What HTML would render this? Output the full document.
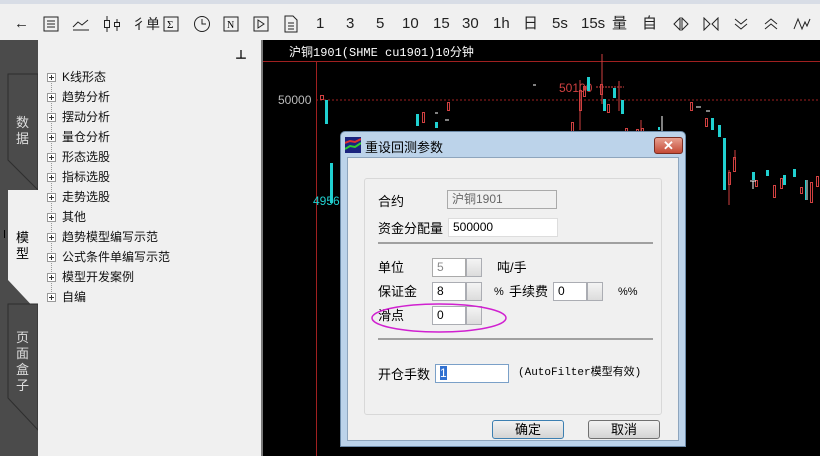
<!DOCTYPE html>
<html><head><meta charset="utf-8"><style>
*{margin:0;padding:0;box-sizing:border-box}
body{width:820px;height:456px;overflow:hidden;position:relative;background:#000;font-family:"Liberation Sans","Noto Sans CJK SC",sans-serif;font-size:12px}
.abs{position:absolute}
#tb{left:0;top:0;width:820px;height:40px;background:#f0f0f0;border-top:4px solid #d8dde6}
.ti{position:absolute;top:10px;font-size:15px;color:#222;font-family:"Liberation Sans","Noto Sans CJK SC",sans-serif;line-height:20px}
#tabs{left:0;top:40px;width:38px;height:416px;background:#4b4b4b}
#tree{left:38px;top:40px;width:223px;height:416px;background:#f0f0f0}
.node{position:absolute;left:9px;font-size:12px;color:#111;line-height:14px;white-space:nowrap}
.pl{display:inline-block;width:9px;height:9px;border:1px solid #999;background:#fff;position:relative;vertical-align:-1px;margin-right:6px}
.pl:before{content:"";position:absolute;left:1px;top:3px;width:5px;height:1px;background:#333}
.pl:after{content:"";position:absolute;left:3px;top:1px;width:1px;height:5px;background:#333}
#dlg{left:340px;top:131px;width:346px;height:316px;background:#bcd3ea;border:1px solid #6c8aa8;border-radius:5px 5px 0 0}
#body{position:absolute;left:6px;top:25px;width:332px;height:284px;background:#f0f0f0;border:1px solid #8ea5bd}
.lb{position:absolute;font-size:13px;color:#000;white-space:nowrap;line-height:15px}
.in{position:absolute;height:19px;background:#fff;border:1px solid #abadb3;font-size:12px;padding-left:4px;line-height:17px}
.sp{position:absolute;width:16px;height:19px;border:1px solid #abadb3;background:linear-gradient(#f4f4f4,#dcdcdc)}
.btn{position:absolute;width:72px;height:19px;border:1px solid #707070;border-radius:3px;background:linear-gradient(#f2f2f2,#d4d4d4);text-align:center;font-size:13px;line-height:17px}
</style></head><body>
<div id="tb" class="abs">
<span class="ti" style="left:14px">←</span>
<svg class="abs" style="left:43px;top:12px" width="16" height="16"><rect x="1" y="1" width="14" height="14" fill="none" stroke="#222"/><path d="M4 5h8M4 8h8M4 11h8" stroke="#222"/></svg>
<svg class="abs" style="left:72px;top:12px" width="18" height="16"><path d="M1 11l5-5 4 3 6-5M1 14h16" stroke="#222" fill="none"/></svg>
<svg class="abs" style="left:103px;top:11px" width="18" height="18"><path d="M4 1v16M14 4v12" stroke="#222"/><rect x="1.5" y="5.5" width="5" height="7" fill="#f0f0f0" stroke="#222"/><rect x="11.5" y="7.5" width="5" height="4" fill="#f0f0f0" stroke="#222"/></svg>
<span class="ti" style="left:132px;font-size:14px">彳单</span>
<svg class="abs" style="left:163px;top:12px" width="16" height="16"><rect x="1" y="1" width="14" height="14" fill="none" stroke="#222"/><text x="4" y="12" font-size="11" font-family="Liberation Serif">Σ</text></svg>
<svg class="abs" style="left:193px;top:11px" width="18" height="18"><circle cx="9" cy="9" r="7.5" fill="none" stroke="#222"/><path d="M9 4v5h4" stroke="#222" fill="none"/></svg>
<svg class="abs" style="left:223px;top:12px" width="16" height="16"><rect x="1" y="1" width="14" height="14" fill="none" stroke="#222"/><text x="4" y="12" font-size="10" font-family="Liberation Serif">N</text></svg>
<svg class="abs" style="left:253px;top:12px" width="16" height="16"><rect x="1" y="1" width="14" height="14" fill="none" stroke="#222"/><path d="M5 4l6 4-6 4z" fill="none" stroke="#222"/></svg>
<svg class="abs" style="left:284px;top:11px" width="14" height="18"><path d="M1 1h8l4 4v12H1z M4 8h6M4 11h6M4 14h6" fill="none" stroke="#222"/></svg>
<span class="ti" style="left:316px">1</span>
<span class="ti" style="left:346px">3</span>
<span class="ti" style="left:376px">5</span>
<span class="ti" style="left:402px">10</span>
<span class="ti" style="left:433px">15</span>
<span class="ti" style="left:462px">30</span>
<span class="ti" style="left:493px">1h</span>
<span class="ti" style="left:523px">日</span>
<span class="ti" style="left:552px">5s</span>
<span class="ti" style="left:581px">15s</span>
<span class="ti" style="left:612px">量</span>
<span class="ti" style="left:642px">自</span>
<svg class="abs" style="left:673px;top:13px" width="16" height="14"><path d="M7 1L1 7l6 6zM9 1l6 6-6 6z" fill="none" stroke="#222"/></svg>
<svg class="abs" style="left:703px;top:13px" width="16" height="14"><path d="M1 1l6 6-6 6zM15 1L9 7l6 6z" fill="none" stroke="#222"/></svg>
<svg class="abs" style="left:733px;top:13px" width="16" height="14"><path d="M2 2l6 5 6-5M2 7l6 5 6-5" fill="none" stroke="#222"/></svg>
<svg class="abs" style="left:763px;top:13px" width="16" height="14"><path d="M2 7l6-5 6 5M2 12l6-5 6 5" fill="none" stroke="#222"/></svg>
<svg class="abs" style="left:793px;top:13px" width="18" height="14"><path d="M1 12L5 2l4 10 3-7 2 4 3-7" fill="none" stroke="#222"/></svg>
</div>

<div id="tabs" class="abs">
<svg width="38" height="416" class="abs" style="left:0;top:0">
<path d="M8 34h30v116L8 120z" fill="#4b4b4b" stroke="#2e2e2e"/>
<path d="M8 150h30v122L8 240z" fill="#f0f0f0"/>
<path d="M8 264h30v126L8 358z" fill="#4b4b4b" stroke="#2e2e2e"/>
<rect x="4" y="190" width="1" height="8" fill="#000"/>
</svg>
<div class="abs" style="left:16px;top:75px;color:#ddd;font-size:13px;line-height:16px;width:14px">数据</div>
<div class="abs" style="left:16px;top:190px;color:#000;font-size:13px;line-height:16px;width:14px">模型</div>
<div class="abs" style="left:16px;top:290px;color:#ddd;font-size:13px;line-height:16px;width:14px">页面盒子</div>
</div>

<div id="tree" class="abs">
<div class="abs" style="left:197px;top:6px;font-size:12px;font-weight:bold">⊥</div>
<div class="abs" style="left:13px;top:38px;width:0;height:220px;border-left:1px dotted #999"></div>
<div class="node" style="top:30px"><span class="pl"></span>K线形态</div>
<div class="node" style="top:50px"><span class="pl"></span>趋势分析</div>
<div class="node" style="top:70px"><span class="pl"></span>摆动分析</div>
<div class="node" style="top:90px"><span class="pl"></span>量仓分析</div>
<div class="node" style="top:110px"><span class="pl"></span>形态选股</div>
<div class="node" style="top:130px"><span class="pl"></span>指标选股</div>
<div class="node" style="top:150px"><span class="pl"></span>走势选股</div>
<div class="node" style="top:170px"><span class="pl"></span>其他</div>
<div class="node" style="top:190px"><span class="pl"></span>趋势模型编写示范</div>
<div class="node" style="top:210px"><span class="pl"></span>公式条件单编写示范</div>
<div class="node" style="top:230px"><span class="pl"></span>模型开发案例</div>
<div class="node" style="top:250px"><span class="pl"></span>自编</div>
</div>
<div class="abs" style="left:261px;top:40px;width:2px;height:416px;background:#7a7a7a"></div>

<svg class="abs" style="left:263px;top:40px" width="557" height="416">
<rect x="0" y="21" width="557" height="1" fill="#a02020"/>
<rect x="53" y="21" width="1" height="395" fill="#a02020"/>
<line x1="53" y1="60" x2="557" y2="60" stroke="#a02020" stroke-dasharray="2,2"/>
<text x="26" y="16" fill="#fff" font-size="12" font-family="Liberation Mono,Noto Sans CJK SC,monospace">沪铜1901(SHME cu1901)10分钟</text>
<text x="15" y="64" fill="#bbb" font-size="12" font-family="Liberation Sans">50000</text>
<text x="296" y="52" fill="#d04040" font-size="12" font-family="Liberation Sans">50100</text>
<path d="M333 47h28" stroke="#d04040" stroke-dasharray="2,1"/>
<text x="50" y="165" fill="#20d0d0" font-size="12" font-family="Liberation Sans">4956</text>
<g fill="#20d0d0">
<rect x="62" y="60" width="3" height="24"/><rect x="67" y="123" width="3" height="40"/>
<rect x="153" y="74" width="3" height="12"/><rect x="172" y="82" width="3" height="6"/><rect x="195" y="93" width="3" height="6"/>
<rect x="324" y="37" width="3" height="14"/><rect x="340" y="59" width="3" height="12"/><rect x="350" y="48" width="3" height="10"/><rect x="358" y="60" width="3" height="14"/>
<rect x="367" y="92" width="3" height="30"/><rect x="405" y="96" width="3" height="5"/><rect x="448" y="78" width="3" height="12"/>
<rect x="455" y="85" width="3" height="12"/><rect x="460" y="98" width="3" height="52"/>
<rect x="489" y="132" width="3" height="8"/><rect x="503" y="130" width="3" height="6"/><rect x="520" y="135" width="3" height="10"/>
<rect x="530" y="129" width="3" height="8"/><rect x="542" y="140" width="3" height="20"/><rect x="576" y="130" width="3" height="16"/>
<rect x="285" y="130" width="3" height="20"/><rect x="272" y="130" width="3" height="30"/><rect x="395" y="87" width="2" height="3"/><rect x="373" y="105" width="3" height="6"/>
</g>
<g fill="none" stroke="#d04040">
<rect x="57.5" y="55.5" width="3" height="4"/><rect x="184.5" y="62.5" width="2" height="8"/><rect x="159.5" y="72.5" width="2" height="10"/>
<rect x="337.5" y="44.5" width="2" height="10"/><rect x="320.5" y="46.5" width="2" height="10"/><rect x="316.5" y="50.5" width="2" height="20"/>
<rect x="344.5" y="64.5" width="2" height="8"/><rect x="362.5" y="88.5" width="2" height="6"/><rect x="373.5" y="89.5" width="2" height="10"/><rect x="378.5" y="88.5" width="2" height="8"/>
<rect x="301.5" y="113.5" width="2" height="60"/><rect x="295.5" y="150.5" width="2" height="50"/><rect x="308.5" y="82.5" width="2" height="40"/>
<rect x="427.5" y="62.5" width="2" height="8"/><rect x="442.5" y="78.5" width="2" height="8"/><rect x="465.5" y="132.5" width="2" height="12"/>
<rect x="470.5" y="117.5" width="2" height="14"/><rect x="492.5" y="140.5" width="2" height="6"/><rect x="510.5" y="145.5" width="2" height="12"/>
<rect x="517.5" y="138.5" width="2" height="10"/><rect x="537.5" y="147.5" width="2" height="6"/><rect x="547.5" y="142.5" width="2" height="20"/>
<rect x="553.5" y="136.5" width="2" height="10"/><rect x="562.5" y="134.5" width="2" height="10"/><rect x="571.5" y="127.5" width="2" height="10"/>
</g>
<g stroke="#d04040"><path d="M339 14v50M317 40v50M356 41v30M378 80v20M466 130v35M544 140v20M572 100v30M472 110v10"/></g>
<g stroke="#fff"><path d="M399 76v18M394 93h8M433 67h5M443 71h4M490 141v8M487 141h6M172 73h3M182 80h4M270 45h3"/></g>
</svg>

<div id="dlg" class="abs">
<svg class="abs" style="left:4px;top:5px" width="16" height="16"><rect width="16" height="16" fill="#1a237e"/><path d="M0 6l5-2 5 1 6-3" stroke="#e03030" stroke-width="2" fill="none"/><path d="M0 12l5-3 5 1 6-4" stroke="#30d030" stroke-width="2" fill="none"/></svg>
<div class="abs" style="left:24px;top:5px;font-size:13px">重设回测参数</div>
<div class="abs" style="left:313px;top:5px;width:29px;height:17px;border:1px solid #7a2d22;border-radius:3px;background:linear-gradient(#e8a090,#c44a36);color:#fff;text-align:center;font-weight:bold;font-size:13px;line-height:15px">✕</div>
<div id="body">
<div class="abs" style="left:16px;top:20px;width:298px;height:237px;border:1px solid #d8d8d8;border-radius:3px"></div>
<div class="lb" style="left:30px;top:36px">合约</div>
<div class="in" style="left:99px;top:32px;width:110px;background:#f0f0f0;color:#666;border-color:#aaa">沪铜1901</div>
<div class="lb" style="left:30px;top:63px">资金分配量</div>
<div class="in" style="left:100px;top:60px;width:110px;border-color:#ddd">500000</div>
<div class="abs" style="left:30px;top:84px;width:275px;height:2px;background:#a0a0a0"></div>
<div class="lb" style="left:30px;top:102px">单位</div>
<div class="in" style="left:84px;top:100px;width:34px;color:#888;border-color:#aaa">5</div><div class="sp" style="left:118px;top:100px"></div>
<div class="lb" style="left:149px;top:102px">吨/手</div>
<div class="lb" style="left:30px;top:126px">保证金</div>
<div class="in" style="left:84px;top:124px;width:34px">8</div><div class="sp" style="left:118px;top:124px"></div>
<div class="lb" style="left:146px;top:127px;font-size:11px">%</div>
<div class="lb" style="left:161px;top:126px">手续费</div>
<div class="in" style="left:205px;top:124px;width:34px">0</div><div class="sp" style="left:239px;top:124px"></div>
<div class="lb" style="left:270px;top:127px;font-size:11px">%%</div>
<div class="lb" style="left:30px;top:150px">滑点</div>
<div class="in" style="left:84px;top:148px;width:34px">0</div><div class="sp" style="left:118px;top:148px"></div>
<svg class="abs" style="left:22px;top:143px" width="140" height="34"><ellipse cx="69" cy="17" rx="67" ry="14" fill="none" stroke="#d020d0" stroke-width="1.5"/></svg>
<div class="abs" style="left:30px;top:180px;width:275px;height:2px;background:#a0a0a0"></div>
<div class="lb" style="left:30px;top:209px">开仓手数</div>
<div class="in" style="left:87px;top:206px;width:74px;border-color:#7aa0c8"><span style="background:#3070d0;color:#fff">1</span></div>
<div class="lb" style="left:170px;top:208px;font-size:11px;font-family:'Liberation Mono','Noto Sans CJK SC',monospace">(AutoFilter模型有效)</div>
<div class="btn" style="left:144px;top:262px;border-color:#3c7fb1">确定</div>
<div class="btn" style="left:240px;top:262px">取消</div>
</div>
</div>
</body></html>
